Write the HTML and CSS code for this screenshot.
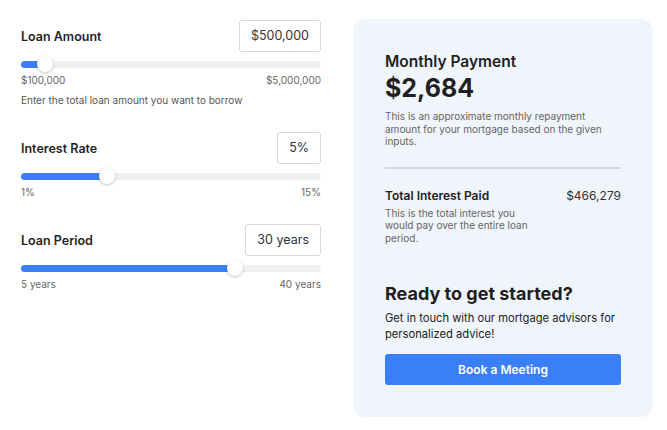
FILE: index.html
```html
<!DOCTYPE html>
<html lang="en">
<head>
    <meta charset="UTF-8">
    <meta name="viewport" content="width=device-width, initial-scale=1.0">
    <title>Mortgage Calculator</title>
    <link rel="stylesheet" href="styles.css">
</head>
<body>
    <div class="calculator">
        <div class="inputs">
            <div class="field">
                <div class="field-head">
                    <span class="field-label">Loan Amount</span>
                    <span class="value-box">$500,000</span>
                </div>
                <div class="slider">
                    <div class="track"><div class="fill" style="width: 8.16%"></div></div>
                    <div class="thumb" style="left: 8.16%"></div>
                </div>
                <div class="scale"><span>$100,000</span><span>$5,000,000</span></div>
                <p class="hint">Enter the total loan amount you want to borrow</p>
            </div>

            <div class="field">
                <div class="field-head">
                    <span class="field-label">Interest Rate</span>
                    <span class="value-box">5%</span>
                </div>
                <div class="slider">
                    <div class="track"><div class="fill" style="width: 28.57%"></div></div>
                    <div class="thumb" style="left: 28.57%"></div>
                </div>
                <div class="scale"><span>1%</span><span>15%</span></div>
            </div>

            <div class="field">
                <div class="field-head">
                    <span class="field-label">Loan Period</span>
                    <span class="value-box">30 years</span>
                </div>
                <div class="slider">
                    <div class="track"><div class="fill" style="width: 71.43%"></div></div>
                    <div class="thumb" style="left: 71.43%"></div>
                </div>
                <div class="scale"><span>5 years</span><span>40 years</span></div>
            </div>
        </div>

        <div class="summary">
            <h2 class="summary-title">Monthly Payment</h2>
            <div class="summary-amount">$2,684</div>
            <p class="summary-note">This is an approximate monthly repayment amount for your mortgage based on the given inputs.</p>

            <hr class="divider">

            <div class="interest-row">
                <div class="interest-text">
                    <h3 class="interest-title">Total Interest Paid</h3>
                    <p class="summary-note">This is the total interest you would pay over the entire loan period.</p>
                </div>
                <span class="interest-value">$466,279</span>
            </div>

            <div class="cta">
                <h2 class="cta-title">Ready to get started?</h2>
                <p class="cta-text">Get in touch with our mortgage advisors for personalized advice!</p>
                <button class="cta-button">Book a Meeting</button>
            </div>
        </div>
    </div>
</body>
</html>
```

FILE: styles.css
```css
body {
    font-family: Inter, "Noto Sans", sans-serif;
    margin: 0;
    padding: 19px 14px 0 21px;
    background-color: #fff;
    color: #1f1f1f;
}

p, h2, h3 { margin: 0; }

.calculator {
    display: flex;
    gap: 32px;
    align-items: flex-start;
}

.inputs {
    width: 300px;
    padding-top: 1px;
}

.field { margin-bottom: 24px; }

.field-head {
    display: flex;
    justify-content: space-between;
    align-items: center;
    height: 32px;
}

.field-label {
    font-size: 12.5px;
    font-weight: 600;
    color: #1f1f1f;
}

.value-box {
    height: 32px;
    line-height: 30px;
    padding: 0 11px;
    border: 1px solid #d9d9d9;
    border-radius: 3px;
    font-size: 12.5px;
    color: #333;
    box-sizing: border-box;
}

.slider {
    position: relative;
    height: 16px;
    margin-top: 4px;
    display: flex;
    align-items: center;
}

.track {
    width: 100%;
    height: 7px;
    border-radius: 4px;
    background-color: #f0f0f0;
    overflow: hidden;
}

.fill {
    height: 100%;
    background-color: #3b7ff6;
}

.thumb {
    position: absolute;
    top: 0;
    width: 16px;
    height: 16px;
    margin-left: -8px;
    border-radius: 50%;
    background-color: #fff;
    box-shadow: 0 1px 3px rgba(0, 0, 0, 0.25);
}

.scale {
    display: flex;
    justify-content: space-between;
    font-size: 10px;
    line-height: 16px;
    color: #666;
}

.hint {
    margin-top: 4px;
    font-size: 10px;
    line-height: 16px;
    color: #555;
}

.summary {
    width: 300px;
    box-sizing: border-box;
    padding: 32px 32px 32px;
    background-color: #f0f4fb;
    border-radius: 12px;
}

.summary-title {
    font-size: 15.5px;
    font-weight: 600;
    line-height: 22px;
}

.summary-amount {
    font-size: 25px;
    font-weight: 700;
    line-height: 30px;
}

.summary-note {
    font-size: 10px;
    line-height: 12.5px;
    color: #666;
}

.summary-amount + .summary-note { margin-top: 7px; }

.divider {
    border: none;
    border-top: 2px solid #d3d6de;
    margin: 19px 0 19px;
}

.interest-row {
    display: flex;
    justify-content: space-between;
    align-items: flex-start;
}

.interest-text { width: 150px; }

.interest-title {
    font-size: 12px;
    font-weight: 600;
    line-height: 16px;
    margin-bottom: 3px;
}

.interest-value {
    font-size: 12px;
    line-height: 16px;
    color: #333;
}

.cta { margin-top: 38px; }

.cta-title {
    font-size: 18px;
    font-weight: 700;
    line-height: 24px;
}

.cta-text {
    margin-top: 4px;
    font-size: 11.2px;
    line-height: 16px;
    color: #222;
}

.cta-button {
    display: block;
    width: 100%;
    height: 31px;
    margin-top: 12px;
    border: none;
    border-radius: 3px;
    background-color: #3b7ff6;
    color: #fff;
    font-family: inherit;
    font-size: 12px;
    font-weight: 600;
    cursor: pointer;
}
```
